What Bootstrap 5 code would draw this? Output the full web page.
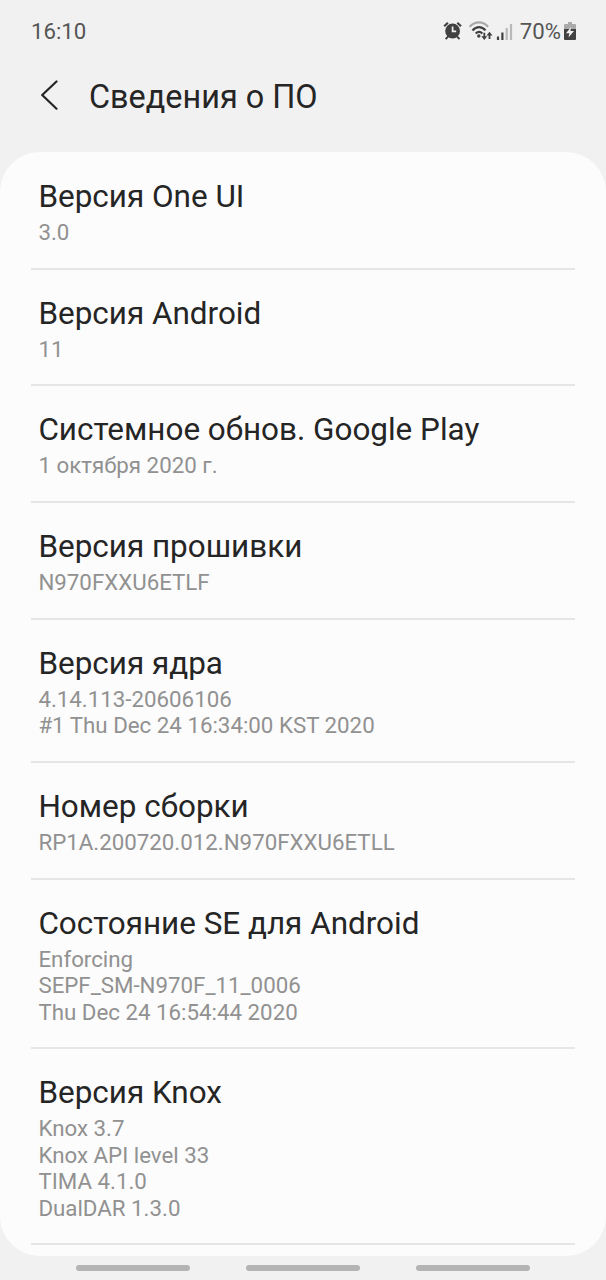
<!DOCTYPE html>
<html lang="ru">
<head>
<meta charset="utf-8">
<meta name="viewport" content="width=device-width, initial-scale=1">
<title>Сведения о ПО</title>
<link href="https://cdn.jsdelivr.net/npm/bootstrap@5.3.0/dist/css/bootstrap.min.css" rel="stylesheet">
<style>
body { background: #f1f1f1; font-family: Roboto, sans-serif; color: #252525; height: 1280px; overflow: hidden; }
.status { height: 62px; padding: 0 30px 0 31px; font-size: 22.2px; line-height: 62px; color: #555; }
.status svg { display: block; flex: none; }
.battery { margin-left: 3px; }
.heading { height: 90px; padding: 0 39px 22px; }
.heading h1 { font-size: 32.4px; line-height: 38px; font-weight: 400; margin: 2px 0 0 29px; }
.panel { height: 1104px; background: #fcfcfc; border-radius: 40px; padding: 1.2px 31px 0; }
.panel .list-group-item { background: transparent; color: inherit; border: 0; border-bottom: 2px solid #e6e6e6; padding: 26px 7px 22.15px 7.4px; }
.panel .list-group-item:last-child { border-bottom-width: 2px; }
.panel h2 { font-size: 31.45px; line-height: 36.5px; font-weight: 400; margin: 0 0 3.5px; }
.panel p { font-size: 22.3px; line-height: 26.5px; color: #919191; margin: 0; }
.keys { height: 24px; padding-left: 76px; gap: 56px; }
.keys span { width: 114px; height: 6px; border-radius: 3px; background: #b4b4b4; }
</style>
</head>
<body>
<div class="status d-flex align-items-center justify-content-between">
  <span>16:10</span>
  <div class="d-flex align-items-center">
    <svg width="90" height="30" viewBox="0 0 90 30" fill="none" stroke="#414141">
      <circle cx="22.6" cy="15" r="7.4" fill="#414141" stroke="none"/>
      <path d="M14.2 10.2 17.9 6.8M27.3 6.8l3.7 3.4" stroke-width="2.2"/>
      <path d="M18.2 20.3l-2.5 2.9M27 20.3l2.5 2.9" stroke-width="2"/>
      <path d="M22.6 10.5V15.4H26.2" stroke="#f1f1f1" stroke-width="1.7"/>
      <path d="M39.6 10.8C45.1 4.8 53.1 4.8 58.1 10.8" stroke="#a9a9a9" stroke-width="2.2"/>
      <path d="M42.5 14.4C46.4 10 51.7 10 55.5 14.4M45.7 17.5C47.8 15.5 50.4 15.5 52.4 17.5" stroke-width="2.2"/>
      <circle cx="48.8" cy="20" r="1.7" fill="#414141" stroke="none"/>
      <path d="M54.3 16.8V21M59.5 18.5V23" stroke-width="1.8"/>
      <path d="M51.3 20.2H57.3L54.3 24ZM56.5 19.6H62.5L59.5 15.8Z" fill="#414141" stroke="none"/>
      <path d="M68 20.5v3.4M72.4 16.5v7.4" stroke-width="2.2"/>
      <path d="M76.7 12v11.9M81 8v15.9" stroke="#b9b9b9" stroke-width="2.2"/>
    </svg>
    <span>70%</span>
    <svg class="battery" width="12" height="20" viewBox="0 0 12 20">
      <path d="M4 1H8V3H11Q12 3 12 4V8H0V4Q0 3 1 3H4Z" fill="#aaa"/>
      <path d="M0 8H12V18Q12 19 11 19H1Q0 19 0 18Z" fill="#414141"/>
      <path d="M7 6 2 12.2H5.4L4.5 16.5 10 9.9H6.5Z" fill="#f1f1f1"/>
    </svg>
  </div>
</div>
<header class="heading d-flex align-items-center">
  <svg width="21" height="32" viewBox="0 0 21 32" fill="none" stroke="#252525" stroke-width="2.2" stroke-linecap="round" stroke-linejoin="round"><path d="M17.5 1.5 3.2 15 17.5 28.7"/></svg>
  <h1>Сведения о ПО</h1>
</header>
<main class="panel">
  <div class="list-group list-group-flush">
    <div class="list-group-item"><h2>Версия One UI</h2><p>3.0</p></div>
    <div class="list-group-item"><h2>Версия Android</h2><p>11</p></div>
    <div class="list-group-item"><h2>Системное обнов. Google Play</h2><p>1 октября 2020 г.</p></div>
    <div class="list-group-item"><h2>Версия прошивки</h2><p>N970FXXU6ETLF</p></div>
    <div class="list-group-item"><h2>Версия ядра</h2><p>4.14.113-20606106<br>#1 Thu Dec 24 16:34:00 KST 2020</p></div>
    <div class="list-group-item"><h2>Номер сборки</h2><p>RP1A.200720.012.N970FXXU6ETLL</p></div>
    <div class="list-group-item"><h2>Состояние SE для Android</h2><p>Enforcing<br>SEPF_SM-N970F_11_0006<br>Thu Dec 24 16:54:44 2020</p></div>
    <div class="list-group-item"><h2>Версия Knox</h2><p>Knox 3.7<br>Knox API level 33<br>TIMA 4.1.0<br>DualDAR 1.3.0</p></div>
  </div>
</main>
<nav class="keys d-flex align-items-center"><span></span><span></span><span></span></nav>
<script src="https://cdn.jsdelivr.net/npm/bootstrap@5.3.0/dist/js/bootstrap.bundle.min.js"></script>
</body>
</html>
